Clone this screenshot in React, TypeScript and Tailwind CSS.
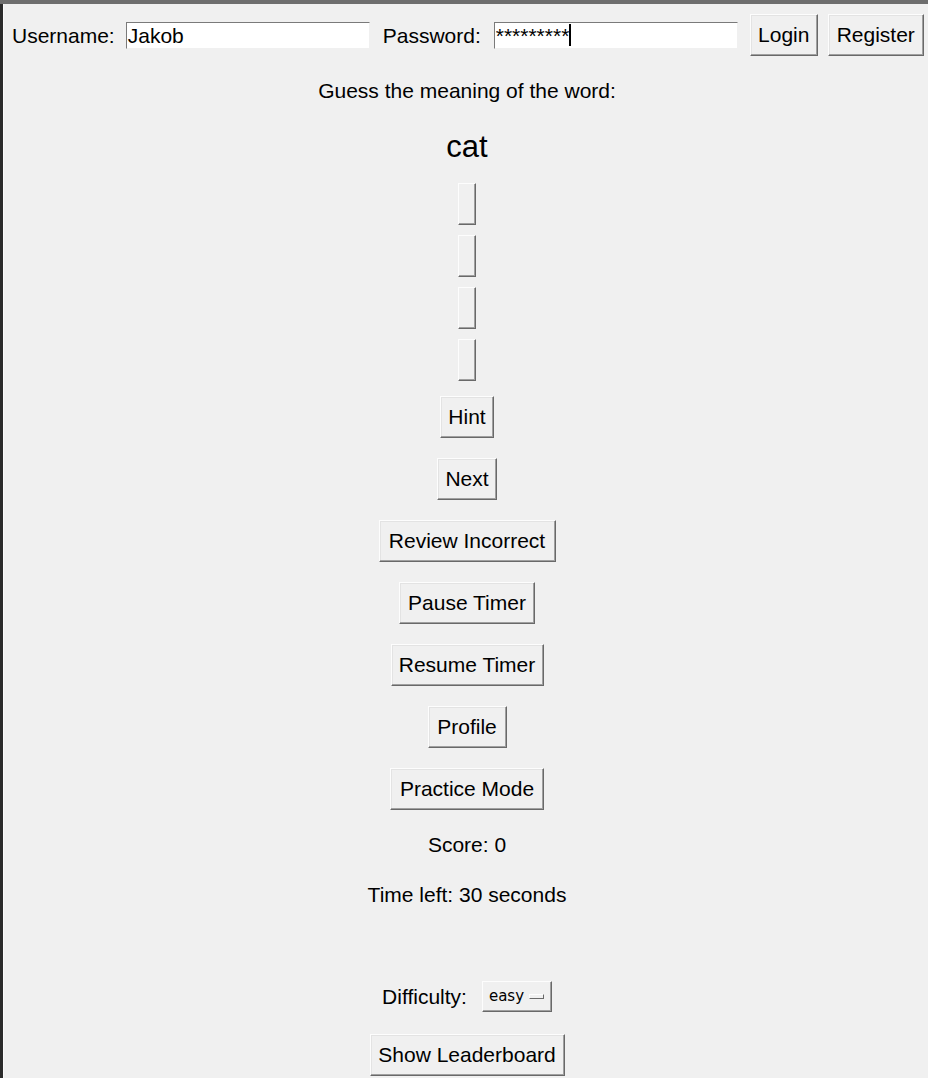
import React, { useState } from "react";

const font = { fontFamily: '"Liberation Sans", Arial, sans-serif' };

const TkButton = ({ label, w }: { label: string; w: string }) => (
  <button
    className={`${w} h-[42px] bg-[#f0f0f0] text-[21px] leading-none text-black border border-t-[#fdfdfd] border-l-[#fdfdfd] border-r-[#696969] border-b-[#696969] shadow-[inset_-1px_-1px_0_#a0a0a0,inset_1px_1px_0_#e3e3e3] flex items-center justify-center pb-[1px]`}
  >
    {label}
  </button>
);

const Entry = ({ value, caret }: { value: string; caret?: boolean }) => (
  <div className="w-[244px] h-[27px] bg-white border border-t-[#7a7a7a] border-l-[#7a7a7a] border-r-[#f0f0f0] border-b-[#f0f0f0] flex items-center pl-[1px] text-[21px] text-black">
    <span className="leading-none">{value}</span>
    {caret && <span className="w-[2px] h-[22px] bg-black" />}
  </div>
);

const OptionSlot = () => (
  <div className="w-[18px] h-[42px] bg-[#f0f0f0] border border-t-[#fdfdfd] border-l-[#fdfdfd] border-r-[#696969] border-b-[#696969] shadow-[inset_-1px_-1px_0_#a0a0a0]" />
);

export default function App() {
  const [difficulty] = useState("easy");
  const sideButtons = [
    { label: "Hint", w: "w-[54px]" },
    { label: "Next", w: "w-[60px]" },
    { label: "Review Incorrect", w: "w-[177px]" },
    { label: "Pause Timer", w: "w-[136px]" },
    { label: "Resume Timer", w: "w-[153px]" },
    { label: "Profile", w: "w-[79px]" },
    { label: "Practice Mode", w: "w-[154px]" },
  ];

  return (
    <div className="w-[928px] h-[1078px] bg-[#f0f0f0] flex flex-col overflow-hidden" style={font}>
      <div className="h-[4px] w-full bg-[#6e6e6e] shrink-0" />
      <div className="flex flex-1">
        <div className="w-[3px] bg-[#2b2b2b]" />
        <div className="w-[1px] bg-[#fafafa]" />
        <div className="flex-1 flex flex-col items-center text-black pl-[2px]">
          {/* login row */}
          <div className="w-full flex items-center pt-[10px] pl-[6px]">
            <span className="text-[21px] leading-none">Username:</span>
            <div className="ml-[11px]">
              <Entry value="Jakob" />
            </div>
            <span className="ml-[13px] text-[21px] leading-none">Password:</span>
            <div className="ml-[13px]">
              <Entry value="*********" caret />
            </div>
            <div className="ml-[12px]">
              <TkButton label="Login" w="w-[68px]" />
            </div>
            <div className="ml-[10px]">
              <TkButton label="Register" w="w-[96px]" />
            </div>
          </div>

          <div className="mt-[23px] h-[24px] leading-[24px] text-[21px]">
            Guess the meaning of the word:
          </div>
          <div className="mt-[26px] h-[36px] leading-[36px] text-[31px]">cat</div>

          <div className="mt-[18px] flex flex-col items-center gap-[10px]">
            <OptionSlot />
            <OptionSlot />
            <OptionSlot />
            <OptionSlot />
          </div>

          <div className="mt-[15px] flex flex-col items-center gap-[20px]">
            {sideButtons.map((b) => (
              <TkButton key={b.label} label={b.label} w={b.w} />
            ))}
          </div>

          <div className="mt-[23px] h-[24px] leading-[24px] text-[21px]">Score: 0</div>
          <div className="mt-[26px] h-[24px] leading-[24px] text-[21px]">
            Time left: 30 seconds
          </div>

          <div className="mt-[74px] flex items-center">
            <span className="text-[21px] leading-none">Difficulty:</span>
            <div className="ml-[15px] w-[70px] h-[31px] bg-[#f0f0f0] border border-t-[#fdfdfd] border-l-[#fdfdfd] border-r-[#696969] border-b-[#696969] shadow-[inset_-1px_-1px_0_#a0a0a0] flex items-center pl-[6px]">
              <span className="text-[15px] leading-none" style={{ fontFamily: '"DejaVu Sans", Tahoma, sans-serif' }}>
                {difficulty}
              </span>
              <div className="ml-auto mr-[7px] w-[15px] h-[5px] bg-[#f0f0f0] border border-t-[#fdfdfd] border-l-[#fdfdfd] border-r-[#696969] border-b-[#696969]" />
            </div>
          </div>

          <div className="mt-[22px]">
            <TkButton label="Show Leaderboard" w="w-[195px]" />
          </div>
        </div>
      </div>
    </div>
  );
}
